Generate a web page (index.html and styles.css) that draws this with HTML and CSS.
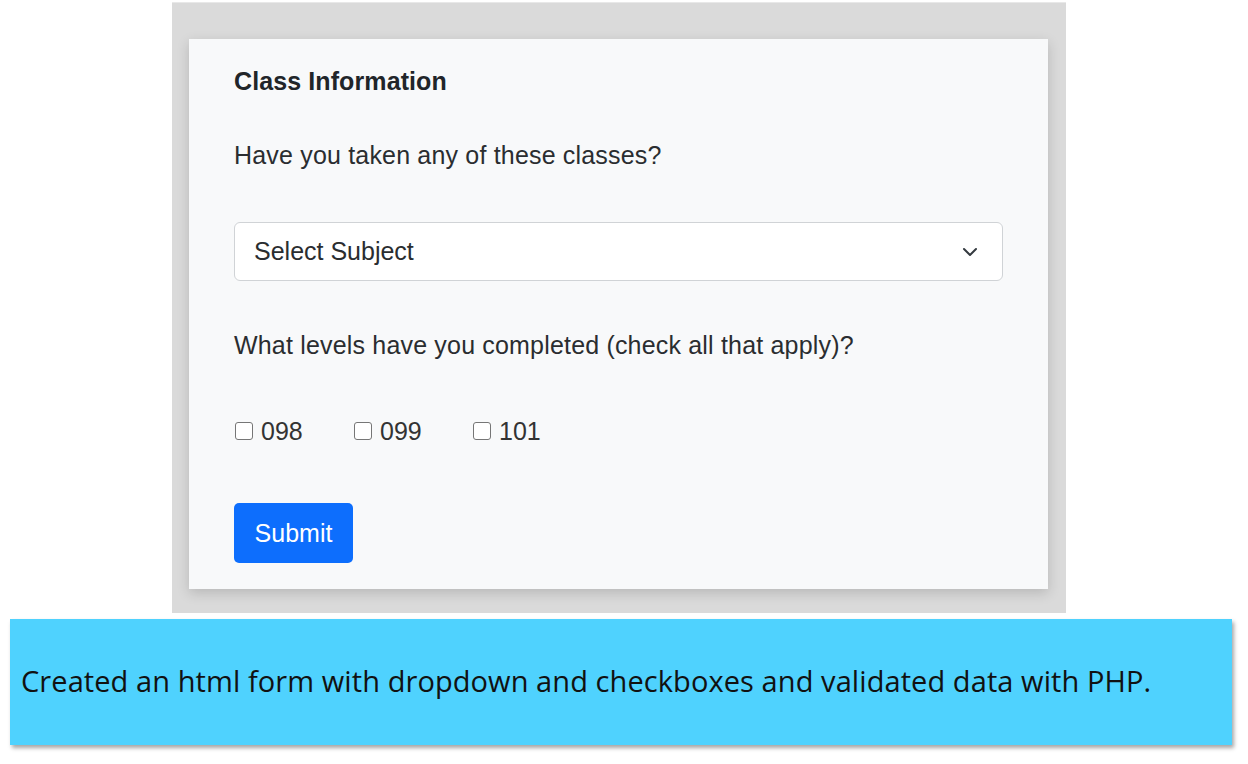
FILE: index.html
```html
<!DOCTYPE html>
<html>
<head>
<meta charset="utf-8">
<link rel="stylesheet" href="styles.css">
</head>
<body>
<div class="page">
  <div class="shot">
    <div class="card">
      <div class="title">Class Information</div>
      <div class="question">Have you taken any of these classes?</div>
      <div class="select">
        <span>Select Subject</span>
        <svg class="chev" width="16" height="16" viewBox="0 0 16 16"><path d="M2 5l6 6 6-6" fill="none" stroke="#343a40" stroke-width="2" stroke-linecap="round" stroke-linejoin="round"/></svg>
      </div>
      <div class="question q2">What levels have you completed (check all that apply)?</div>
      <div class="checks">
        <label class="check"><span class="box"></span>098</label>
        <label class="check"><span class="box"></span>099</label>
        <label class="check"><span class="box"></span>101</label>
      </div>
      <div class="btn">Submit</div>
    </div>
  </div>
  <div class="note">Created an html form with dropdown and checkboxes and validated data with PHP.</div>
</div>
</body>
</html>
```
FILE: styles.css
```css
html, body { margin: 0; padding: 0; background: #ffffff; }
.page { display: flex; flex-direction: column; width: 1248px; height: 764px; overflow: hidden; }
.shot {
  margin: 2px 0 0 172px;
  width: 894px;
  height: 611px;
  box-sizing: border-box;
  padding: 36px 18px 24px 17px;
  background: #dadada;
  border-top: 1px solid #e8e8e8;
}
.card {
  box-sizing: border-box;
  height: 550px;
  background: #f8f9fa;
  box-shadow: 0 4px 12px rgba(0,0,0,0.16);
  padding: 27px 45px 0 45px;
  font-family: "Liberation Sans", Arial, sans-serif;
  color: #212529;
  display: flex;
  flex-direction: column;
}
.title { font-size: 25px; font-weight: bold; line-height: 30px; letter-spacing: 0.1px; }
.question { font-size: 25px; line-height: 30px; margin-top: 44px; color: #2a2d30; letter-spacing: 0.18px; }
.select {
  margin-top: 52px;
  height: 59px;
  width: 769px;
  box-sizing: border-box;
  border: 1px solid #d0d3d6;
  border-radius: 6px;
  background: #fff;
  display: flex;
  align-items: center;
  justify-content: space-between;
  padding: 0 24px 0 19px;
  font-size: 25px;
  color: #2a2d30;
}
.q2 { margin-top: 49px; }
.checks { display: flex; margin-top: 56px; height: 30px; }
.check { display: flex; align-items: center; font-size: 25px; line-height: 30px; width: 119px; color: #333; }
.box { width: 18px; height: 18px; border: 1px solid #767676; border-radius: 3px; background: #fff; margin-left: 1px; margin-right: 8px; box-sizing: border-box; }
.btn {
  margin-top: 57px;
  width: 119px;
  height: 60px;
  background: #0d6efd;
  color: #fff;
  border-radius: 5px;
  font-size: 25px;
  display: flex;
  align-items: center;
  justify-content: center;
}
.note {
  margin: 6px 0 0 10px;
  width: 1222px;
  height: 126px;
  box-sizing: border-box;
  background: #4fd2fe;
  box-shadow: 2px 3px 4px rgba(0,0,0,0.35);
  font-family: "Open Sans", sans-serif;
  font-size: 29px;
  letter-spacing: 0.08px;
  color: #111;
  display: flex;
  align-items: center;
  padding: 0 0 4px 11px;
}
```
